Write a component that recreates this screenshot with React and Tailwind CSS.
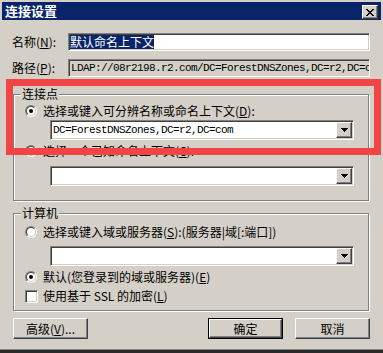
import React from "react";

const raised =
  "border border-t-white border-l-white border-r-[#404040] border-b-[#404040] shadow-[inset_-1px_-1px_0_#808080]";
const sunken =
  "border border-t-[#808080] border-l-[#808080] border-r-white border-b-white shadow-[inset_1px_1px_0_#404040,inset_-1px_-1px_0_#d4d0c8]";
const etched =
  "border border-[#808080] shadow-[inset_1px_1px_0_#ffffff,1px_1px_0_#ffffff]";
const mono = "font-['Liberation_Mono',monospace] text-[11px] tracking-[-0.6px] leading-[14px] whitespace-nowrap";

function Radio({ checked }) {
  return (
    <div className="w-3 h-3 shrink-0 rounded-full border border-t-[#808080] border-l-[#808080] border-r-white border-b-white">
      <div className="w-full h-full rounded-full border border-t-[#404040] border-l-[#404040] border-r-[#d4d0c8] border-b-[#d4d0c8] bg-white flex items-center justify-center">
        {checked && <div className="w-1 h-1 rounded-full bg-black" />}
      </div>
    </div>
  );
}

function Arrow() {
  return (
    <svg width="7" height="4" viewBox="0 0 7 4" shapeRendering="crispEdges">
      <rect x="0" y="0" width="7" height="1" fill="#000" />
      <rect x="1" y="1" width="5" height="1" fill="#000" />
      <rect x="2" y="2" width="3" height="1" fill="#000" />
      <rect x="3" y="3" width="1" height="1" fill="#000" />
    </svg>
  );
}

function Combo({ text, mt }) {
  return (
    <div className={`ml-[36px] ${mt} w-[304px] h-5 bg-white p-[1px] flex items-center ${sunken}`}>
      <div className={`flex-1 pl-[1px] overflow-hidden ${mono}`}>{text}</div>
      <div className={`w-4 h-4 bg-[#d4d0c8] flex items-center justify-center ${raised}`}>
        <Arrow />
      </div>
    </div>
  );
}

function CloseGlyph() {
  const rows = [
    [0, 1, 6, 7],
    [1, 2, 5, 6],
    [2, 3, 4, 5],
    [3, 4],
    [2, 3, 4, 5],
    [1, 2, 5, 6],
    [0, 1, 6, 7],
  ];
  return (
    <svg width="8" height="7" viewBox="0 0 8 7" shapeRendering="crispEdges">
      {rows.map((r, y) =>
        r.map((x) => <rect key={`${x}-${y}`} x={x} y={y} width="1" height="1" fill="#000" />)
      )}
    </svg>
  );
}

export default function App() {
  return (
    <div className="relative w-[383px] h-[353px] bg-[#d4d0c8] overflow-hidden flex flex-col font-['Noto_Sans_CJK_SC',sans-serif] text-[12px] leading-[14px] text-black">
      <div className="flex-1 px-[2px] pt-[2px] flex flex-col">
        {/* Title bar */}
        <div className="h-[18px] bg-[#0a246a] flex items-center justify-between pl-[3px] pr-[3px]">
          <span className="text-white font-bold text-[13px] leading-[16px]">连接设置</span>
          <div className={`w-4 h-[14px] bg-[#d4d0c8] flex items-center justify-center mt-[2px] ${raised}`}>
            <CloseGlyph />
          </div>
        </div>

        {/* Name row */}
        <div className="flex items-center h-[18px] mt-[13px] pl-[10px]">
          <div className="w-[56px]">
            名称(<u>N</u>):
          </div>
          <div className={`w-[302px] h-[18px] bg-white pl-[1px] flex items-center ${sunken}`}>
            <span className="bg-[#0a246a] text-white leading-[14px]">默认命名上下文</span>
          </div>
        </div>

        {/* Path row */}
        <div className="flex items-center h-[18px] mt-[8px] pl-[10px]">
          <div className="w-[56px]">
            路径(<u>P</u>):
          </div>
          <div className={`w-[302px] h-[18px] bg-[#d4d0c8] pl-[2px] flex items-center overflow-hidden ${sunken}`}>
            <span className={mono}>LDAP://08r2198.r2.com/DC=ForestDNSZones,DC=r2,DC=com</span>
          </div>
        </div>

        {/* Group: 连接点 */}
        <div className={`relative ml-[11px] mt-[17px] w-[356px] flex flex-col pb-[14px] ${etched}`}>
          <span className="absolute left-[7px] top-[-8px] bg-[#d4d0c8] px-[1px]">连接点</span>
          <div className="mt-[9px] h-[14px] flex items-center pl-[11px] gap-[6px]">
            <Radio checked />
            <span>
              选择或键入可分辨名称或命名上下文(<u>D</u>):
            </span>
          </div>
          <Combo mt="mt-[2px]" text="DC=ForestDNSZones,DC=r2,DC=com" />
          <div className="mt-[4px] h-[14px] flex items-center pl-[11px] gap-[6px]">
            <Radio />
            <span>
              选择一个已知命名上下文(<u>C</u>):
            </span>
          </div>
          <Combo mt="mt-[8px]" text="" />
        </div>

        {/* Group: 计算机 */}
        <div className={`relative ml-[11px] mt-[12px] w-[356px] flex flex-col pb-[7px] ${etched}`}>
          <span className="absolute left-[7px] top-[-8px] bg-[#d4d0c8] px-[1px]">计算机</span>
          <div className="mt-[11px] h-[14px] flex items-center pl-[11px] gap-[6px]">
            <Radio />
            <span>
              选择或键入域或服务器(<u>S</u>):(服务器|域[:端口])
            </span>
          </div>
          <Combo mt="mt-[7px]" text="" />
          <div className="mt-[4px] h-[14px] flex items-center pl-[11px] gap-[6px]">
            <Radio checked />
            <span>
              默认(您登录到的域或服务器)(<u>E</u>)
            </span>
          </div>
          <div className="mt-[5px] h-[14px] flex items-center pl-[11px] gap-[5px]">
            <div className={`w-[13px] h-[13px] bg-white shrink-0 ${sunken}`} />
            <span>
              使用基于 SSL 的加密(<u>L</u>)
            </span>
          </div>
        </div>

        {/* Buttons */}
        <div className="mt-[7px] ml-[11px] w-[357px] h-[21px] flex gap-[12px]">
          <div className={`w-[75px] h-[21px] flex items-center justify-center ${raised}`}>
            高级(<u>V</u>)...
          </div>
          <div className="ml-auto w-[75px] h-[21px] border border-black">
            <div className={`w-full h-full flex items-center justify-center ${raised}`}>确定</div>
          </div>
          <div className={`w-[75px] h-[21px] flex items-center justify-center ${raised}`}>取消</div>
        </div>
      </div>
      <div className="h-[4px] border-t border-[#808080] bg-[#2b2b2b]" />

      {/* Red annotation rectangle */}
      <div className="absolute left-[6px] top-[79px] w-[375px] h-[76px] border-[7px] border-[#f24444]" />
    </div>
  );
}
